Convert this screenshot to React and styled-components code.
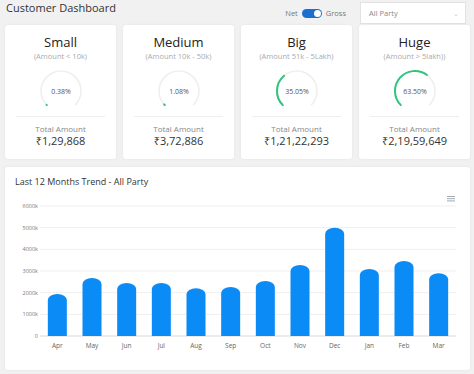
import React from "react";
import styled, { createGlobalStyle } from "styled-components";

const Global = createGlobalStyle`
  html, body { margin: 0; padding: 0; background: #f1f1f2; }
  body { font-family: "Open Sans", "Noto Sans", sans-serif; color: #333; }
`;

const Page = styled.div`
  width: 474px;
  height: 374px;
  box-sizing: border-box;
  padding: 0 4px 0 5px;
  overflow: hidden;
`;

const Header = styled.div`
  height: 25px;
  display: flex;
  align-items: flex-start;
`;

const Title = styled.div`
  font-size: 11px;
  line-height: 14px;
  margin-top: 1px;
  padding-left: 1px;
  color: #333;
  flex: 1;
`;

const Toggle = styled.div`
  display: flex;
  align-items: center;
  gap: 2px;
  margin-top: 8px;
  margin-right: 14px;
  font-size: 7.5px;
  color: #777;
`;

const Switch = styled.div`
  width: 20px;
  height: 9px;
  border-radius: 5px;
  background: #1a6fd0;
  position: relative;
  margin: 0 2px;
  &::after {
    content: "";
    position: absolute;
    right: 1px;
    top: 1px;
    width: 7px;
    height: 7px;
    border-radius: 50%;
    background: #fff;
  }
`;

const Select = styled.div`
  width: 106px;
  height: 22px;
  margin-top: 2px;
  margin-right: 4px;
  box-sizing: border-box;
  background: #fff;
  border: 1px solid #e2e2e2;
  display: flex;
  align-items: center;
  justify-content: space-between;
  padding: 0 6px 0 8px;
  font-size: 7.5px;
  color: #888;
`;

const Chevron = styled.span`
  color: #ccc;
  font-size: 7px;
`;

const Cards = styled.div`
  display: grid;
  grid-template-columns: repeat(4, 111px);
  gap: 7px;
`;

const Card = styled.div`
  background: #fff;
  border-radius: 3px;
  box-shadow: 0 0 3px rgba(0, 0, 0, 0.06);
  height: 134px;
  box-sizing: border-box;
  padding-top: 8px;
  display: flex;
  flex-direction: column;
  align-items: center;
`;

const CardTitle = styled.div`
  font-size: 13px;
  line-height: 18px;
  color: #222;
`;

const Sub = styled.div`
  font-size: 7.5px;
  line-height: 11px;
  color: #aaa;
`;

const Gauge = styled.svg`
  display: block;
  margin-top: 6px;
`;

const Divider = styled.div`
  align-self: stretch;
  margin: 2px 11px 0;
  height: 1px;
  background: #eeeeee;
`;

const TotalLabel = styled.div`
  margin-top: 6px;
  font-size: 8px;
  line-height: 11px;
  color: #888;
`;

const Amount = styled.div`
  font-size: 11px;
  line-height: 14px;
  color: #333;
`;

const ChartCard = styled.div`
  margin-top: 8px;
  width: 465px;
  height: 203px;
  background: #fff;
  border-radius: 3px;
  box-shadow: 0 0 3px rgba(0, 0, 0, 0.06);
  box-sizing: border-box;
  padding-top: 8px;
`;

const ChartTitle = styled.div`
  padding-left: 10px;
  font-size: 9px;
  line-height: 14px;
  color: #333;
`;

const ChartSvg = styled.svg`
  display: block;
  margin-top: 1px;
`;

const cards = [
  { t: "Small", s: "(Amount < 10k)", p: 0.38, a: "₹1,29,868" },
  { t: "Medium", s: "(Amount 10k - 50k)", p: 1.08, a: "₹3,72,886" },
  { t: "Big", s: "(Amount 51k - 5Lakh)", p: 35.05, a: "₹1,21,22,293" },
  { t: "Huge", s: "(Amount > 5lakh))", p: 63.5, a: "₹2,19,59,649" },
];

function arcPath(cx, cy, r, a0, a1) {
  const rad = (d) => ((d - 90) * Math.PI) / 180;
  const x0 = cx + r * Math.cos(rad(a0));
  const y0 = cy + r * Math.sin(rad(a0));
  const x1 = cx + r * Math.cos(rad(a1));
  const y1 = cy + r * Math.sin(rad(a1));
  const large = a1 - a0 > 180 ? 1 : 0;
  return `M${x0} ${y0} A${r} ${r} 0 ${large} 1 ${x1} ${y1}`;
}

function RadialGauge({ p }) {
  const end = -135 + Math.max((p / 100) * 270, 1.2);
  return (
    <Gauge width="46" height="46" viewBox="0 0 46 46">
      <path d={arcPath(23, 23, 20, -135, 135)} fill="none" stroke="#efefef" strokeWidth="1.6" />
      <path d={arcPath(23, 23, 20, -135, end)} fill="none" stroke="#2fc57a" strokeWidth="2" strokeLinecap="round" />
      <text x="23" y="25.5" textAnchor="middle" fontSize="7" fill="#555" fontFamily="Open Sans, sans-serif">
        {p.toFixed(2)}%
      </text>
    </Gauge>
  );
}

const months = [
  ["Apr", 1940], ["May", 2680], ["Jun", 2450], ["Jul", 2450], ["Aug", 2200], ["Sep", 2260],
  ["Oct", 2540], ["Nov", 3280], ["Dec", 5000], ["Jan", 3090], ["Feb", 3460], ["Mar", 2900],
];

function Chart() {
  const top = 16, bottom = 146, left = 35, right = 451;
  const h = bottom - top;
  const step = (right - left) / 12;
  const bw = 19;
  const ticks = [6000, 5000, 4000, 3000, 2000, 1000, 0];
  return (
    <ChartSvg width="465" height="180" viewBox="0 0 465 180" fontFamily="Open Sans, sans-serif">
      {ticks.map((t) => {
        const y = bottom - (t / 6000) * h;
        return (
          <g key={t}>
            <line x1={left} x2={right} y1={y} y2={y} stroke="#efefef" strokeWidth="1" />
            <text x="33" y={y + 2} textAnchor="end" fontSize="5.5" fill="#777">
              {t === 0 ? "0" : `${t}k`}
            </text>
          </g>
        );
      })}
      <line x1={left} x2={right} y1={bottom} y2={bottom} stroke="#e0e0e0" strokeWidth="1" />
      {months.map(([m, v], i) => {
        const cx = left + step * (i + 0.5);
        const x0 = cx - bw / 2;
        const yt = bottom - (v / 6000) * h;
        const ry = 6;
        const d = `M${x0} ${bottom} L${x0} ${yt + ry} A${bw / 2} ${ry} 0 0 1 ${x0 + bw} ${yt + ry} L${x0 + bw} ${bottom} Z`;
        return (
          <g key={m}>
            <path d={d} fill="#0a8bf5" />
            <text x={cx} y={158} textAnchor="middle" fontSize="6.5" fill="#666">{m}</text>
          </g>
        );
      })}
      <g stroke="#9aa3ab" strokeWidth="0.9">
        <line x1="442" x2="450" y1="6.5" y2="6.5" />
        <line x1="442" x2="450" y1="8.7" y2="8.7" />
        <line x1="442" x2="450" y1="10.9" y2="10.9" />
      </g>
    </ChartSvg>
  );
}

export default function App() {
  return (
    <Page>
      <Global />
      <Header>
        <Title>Customer Dashboard</Title>
        <Toggle>
          <span>Net</span>
          <Switch />
          <span>Gross</span>
        </Toggle>
        <Select>
          <span>All Party</span>
          <Chevron>⌄</Chevron>
        </Select>
      </Header>
      <Cards>
        {cards.map((c) => (
          <Card key={c.t}>
            <CardTitle>{c.t}</CardTitle>
            <Sub>{c.s}</Sub>
            <RadialGauge p={c.p} />
            <Divider />
            <TotalLabel>Total Amount</TotalLabel>
            <Amount>{c.a}</Amount>
          </Card>
        ))}
      </Cards>
      <ChartCard>
        <ChartTitle>Last 12 Months Trend - All Party</ChartTitle>
        <Chart />
      </ChartCard>
    </Page>
  );
}
